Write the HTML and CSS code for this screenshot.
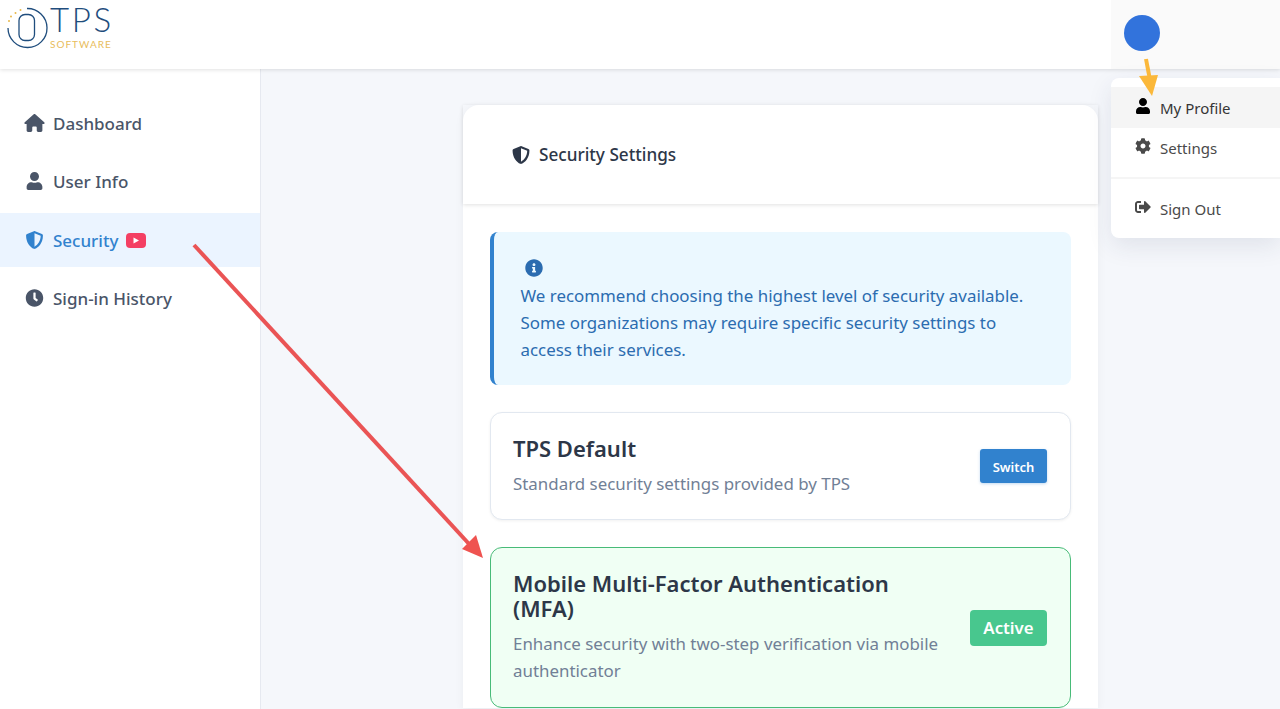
FILE: index.html
```html
<!DOCTYPE html>
<html lang="en">
<head>
<meta charset="utf-8">
<title>Security Settings</title>
<link rel="stylesheet" href="styles.css">
</head>
<body>
<div class="page">
  <header class="topbar">
    <div class="logo">
      <svg class="logo-mark" viewBox="0 0 48 48" width="48" height="48">
        <path d="M25 4.5A19.5 19.5 0 1 1 6 24" fill="none" stroke="#1f4d7d" stroke-width="1.3"/>
        <rect x="17" y="10.5" width="15.5" height="26" rx="6" fill="none" stroke="#1f4d7d" stroke-width="1.3"/>
        <circle cx="7" cy="17" r="1" fill="#e8b84a"/><circle cx="9" cy="12.5" r="1" fill="#e8b84a"/><circle cx="13.5" cy="9" r="1" fill="#e8b84a"/><circle cx="18.5" cy="6" r="1" fill="#e8b84a"/>
      </svg>
      <div class="logo-words"><span class="logo-tps">TPS</span><span class="logo-soft">SOFTWARE</span></div>
    </div>
    <div class="account"><span class="avatar"></span></div>
  </header>
  <div class="layout">
    <nav class="sidebar">
      <a class="nav-item"><svg class="nav-icon" viewBox="0 0 576 512"><path d="M575.8 255.5c0 18-15 32.1-32 32.1h-32l.7 160.2c0 2.7-.2 5.4-.5 8.1V472c0 22.1-17.9 40-40 40H456c-1.1 0-2.2 0-3.3-.1c-1.4 .1-2.8 .1-4.2 .1H416 392c-22.1 0-40-17.9-40-40V448 384c0-17.7-14.3-32-32-32H256c-17.7 0-32 14.3-32 32v64 24c0 22.1-17.9 40-40 40H160 128.1c-1.5 0-3-.1-4.5-.2c-1.2 .1-2.4 .2-3.6 .2H104c-22.1 0-40-17.9-40-40V360c0-.9 0-1.9 .1-2.8V287.6H32c-18 0-32-14-32-32.1c0-9 3-17 10-24L266.4 8c7-7 15-8 22-8s15 2 21 7L564.8 231.5c8 7 12 15 11 24z"/></svg>Dashboard</a>
      <a class="nav-item"><svg class="nav-icon" viewBox="0 0 448 512"><path d="M224 256c70.7 0 128-57.3 128-128S294.7 0 224 0 96 57.3 96 128s57.3 128 128 128zm89.6 32h-16.7c-22.2 10.2-46.9 16-72.9 16s-50.6-5.8-72.9-16h-16.7C60.2 288 0 348.2 0 422.4V464c0 26.5 21.5 48 48 48h352c26.5 0 48-21.5 48-48v-41.6c0-74.2-60.2-134.4-134.4-134.4z"/></svg>User Info</a>
      <a class="nav-item nav-active"><svg class="nav-icon" viewBox="0 0 512 512"><path d="M466.5 83.7l-192-80a48.15 48.15 0 0 0-36.9 0l-192 80C27.7 91.1 16 108.6 16 128c0 198.5 114.5 335.7 221.5 380.3 11.8 4.9 25.1 4.9 36.9 0C360.1 472.6 496 349.3 496 128c0-19.4-11.7-36.9-29.5-44.3zM256.1 446.3l-.1-381 175.9 73.3c-3.3 151.4-82.1 261.1-175.8 307.7z"/></svg><span class="nav-label">Security</span><span class="video-badge"><svg viewBox="0 0 20 15" width="20" height="15"><rect width="20" height="15" rx="4" fill="#f43f63"/><path d="M7.5 4.5l5.5 3-5.5 3z" fill="#fff"/></svg></span></a>
      <a class="nav-item"><svg class="nav-icon" viewBox="0 0 512 512"><path d="M256,8C119,8,8,119,8,256S119,504,256,504,504,393,504,256,393,8,256,8Zm92.49,313h0l-20,25a16,16,0,0,1-22.49,2.5h0l-67-49.72a40,40,0,0,1-15-31.23V112a16,16,0,0,1,16-16h32a16,16,0,0,1,16,16V256l58,42.5A16,16,0,0,1,348.49,321Z"/></svg><span class="nav-label">Sign-in History</span></a>
    </nav>
    <main class="main">
      <section class="card">
        <div class="card-head">
          <svg class="head-icon" viewBox="0 0 512 512"><path d="M466.5 83.7l-192-80a48.15 48.15 0 0 0-36.9 0l-192 80C27.7 91.1 16 108.6 16 128c0 198.5 114.5 335.7 221.5 380.3 11.8 4.9 25.1 4.9 36.9 0C360.1 472.6 496 349.3 496 128c0-19.4-11.7-36.9-29.5-44.3zM256.1 446.3l-.1-381 175.9 73.3c-3.3 151.4-82.1 261.1-175.8 307.7z"/></svg>
          <h1 class="card-title">Security Settings</h1>
        </div>
        <div class="card-body">
          <div class="alert">
            <svg class="alert-icon" viewBox="0 0 512 512"><path d="M256 8C119.043 8 8 119.083 8 256c0 136.997 111.043 248 248 248s248-111.003 248-248C504 119.083 392.957 8 256 8zm0 110c23.196 0 42 18.804 42 42s-18.804 42-42 42-42-18.804-42-42 18.804-42 42-42zm56 254c0 6.627-5.373 12-12 12h-88c-6.627 0-12-5.373-12-12v-24c0-6.627 5.373-12 12-12h12v-64h-12c-6.627 0-12-5.373-12-12v-24c0-6.627 5.373-12 12-12h64c6.627 0 12 5.373 12 12v100h12c6.627 0 12 5.373 12 12v24z"/></svg>
            <p class="alert-text">We recommend choosing the highest level of security available. Some organizations may require specific security settings to access their services.</p>
          </div>
          <div class="option">
            <div class="option-copy">
              <h2 class="option-title">TPS Default</h2>
              <p class="option-desc">Standard security settings provided by TPS</p>
            </div>
            <button class="btn-switch">Switch</button>
          </div>
          <div class="option option-active">
            <div class="option-copy">
              <h2 class="option-title">Mobile Multi-Factor Authentication (MFA)</h2>
              <p class="option-desc">Enhance security with two-step verification via mobile authenticator</p>
            </div>
            <span class="badge-active">Active</span>
          </div>
        </div>
      </section>
    </main>
  </div>
  <div class="menu">
    <a class="menu-item menu-hover"><svg class="menu-icon" viewBox="0 0 448 512"><path d="M224 256c70.7 0 128-57.3 128-128S294.7 0 224 0 96 57.3 96 128s57.3 128 128 128zm89.6 32h-16.7c-22.2 10.2-46.9 16-72.9 16s-50.6-5.8-72.9-16h-16.7C60.2 288 0 348.2 0 422.4V464c0 26.5 21.5 48 48 48h352c26.5 0 48-21.5 48-48v-41.6c0-74.2-60.2-134.4-134.4-134.4z"/></svg>My Profile</a>
    <a class="menu-item menu-plain"><svg class="menu-icon" viewBox="0 0 512 512"><path d="M487.4 315.7l-42.6-24.6c4.3-23.2 4.3-47 0-70.2l42.6-24.6c4.9-2.8 7.1-8.6 5.5-14-11.1-35.6-30-67.8-54.7-94.6-3.8-4.1-10-5.1-14.8-2.3L380.8 110c-17.9-15.4-38.5-27.3-60.8-35.1V25.8c0-5.6-3.9-10.5-9.4-11.7-36.7-8.2-74.3-7.8-109.2 0-5.5 1.2-9.4 6.1-9.4 11.7V75c-22.2 7.9-42.8 19.8-60.8 35.1L88.7 85.5c-4.9-2.8-11-1.9-14.8 2.3-24.7 26.7-43.6 58.9-54.7 94.6-1.7 5.4.6 11.2 5.5 14L67.3 221c-4.3 23.2-4.3 47 0 70.2l-42.6 24.6c-4.9 2.8-7.1 8.6-5.5 14 11.1 35.6 30 67.8 54.7 94.6 3.8 4.1 10 5.1 14.8 2.3l42.6-24.6c17.9 15.4 38.5 27.3 60.8 35.1v49.2c0 5.6 3.9 10.5 9.4 11.7 36.7 8.2 74.3 7.8 109.2 0 5.5-1.2 9.4-6.1 9.4-11.7v-49.2c22.2-7.9 42.8-19.8 60.8-35.1l42.6 24.6c4.9 2.8 11 1.9 14.8-2.3 24.7-26.7 43.6-58.9 54.7-94.6 1.5-5.5-.7-11.3-5.6-14.1zM256 336c-44.1 0-80-35.9-80-80s35.9-80 80-80 80 35.9 80 80-35.9 80-80 80z"/></svg>Settings</a>
    <div class="menu-rule"></div>
    <a class="menu-item menu-plain"><svg class="menu-icon" viewBox="0 0 512 512"><path d="M497 273L329 441c-15 15-41 4.5-41-17v-96H152c-13.3 0-24-10.7-24-24v-96c0-13.3 10.7-24 24-24h136V88c0-21.4 25.9-32 41-17l168 168c9.3 9.4 9.3 24.6 0 34zM192 436v-40c0-6.6-5.4-12-12-12H96c-17.7 0-32-14.3-32-32V160c0-17.7 14.3-32 32-32h84c6.6 0 12-5.4 12-12V76c0-6.6-5.4-12-12-12H96c-53 0-96 43-96 96v192c0 53 43 96 96 96h84c6.6 0 12-5.4 12-12z"/></svg>Sign Out</a>
  </div>
  <svg class="arrows" viewBox="0 0 1280 709" width="1280" height="709">
    <line x1="194" y1="245" x2="470" y2="545" stroke="#ea5455" stroke-width="4"/>
    <polygon points="462,549 476,535 483,558" fill="#ef5350"/>
    <line x1="1146" y1="59" x2="1150" y2="80" stroke="#fbb83a" stroke-width="4"/>
    <polygon points="1139,76 1158,75 1152,96" fill="#fbb83a"/>
  </svg>
</div>
</body>
</html>
```
FILE: styles.css
```css
* { box-sizing: border-box; }
html, body { margin: 0; padding: 0; height: 100%; overflow: hidden; }
body { font-family: "Noto Sans", "Open Sans", sans-serif; background: #fff; color: #2d3748; }
h1, h2, p { margin: 0; }
.page { position: relative; width: 1280px; height: 709px; overflow: hidden; display: flex; flex-direction: column; }

.topbar { height: 69px; flex: none; display: flex; justify-content: space-between; background: #fff; box-shadow: 0 1px 4px rgba(0,0,0,.12); position: relative; z-index: 2; }
.logo { display: flex; padding: 3px 0 0 2px; align-items: flex-start; }
.logo-mark { margin-top: 1px; }
.logo-words { display: flex; flex-direction: column; }
.logo-tps { font-family: "Lato", sans-serif; font-weight: 300; font-size: 33px; line-height: 33px; letter-spacing: 2.6px; color: #1f4d7d; }
.logo-soft { font-family: "Lato", sans-serif; font-size: 10px; line-height: 11px; margin-top: 3px; letter-spacing: 1px; color: #e8bd5c; }
.account { width: 169px; background: #fafafa; padding: 15px 0 0 13px; }
.avatar { display: block; width: 36px; height: 36px; border-radius: 50%; background: #3273dc; }

.layout { flex: 1; display: flex; min-height: 0; }
.sidebar { width: 261px; flex: none; background: #fff; border-right: 1px solid #e6e9f0; padding-top: 27px; display: flex; flex-direction: column; gap: 4.33px; }
.nav-item { height: 54px; display: flex; align-items: center; padding-left: 24px; font-size: 17px; font-weight: 500; color: #4a5568; }
.nav-label { padding-top: 1px; }
.nav-icon { width: 21px; height: 18px; margin-right: 8px; fill: #4a5568; flex: none; }
.nav-active { background: #ebf4ff; color: #3182ce; }
.nav-active .nav-icon { fill: #3182ce; }
.video-badge { display: flex; margin-left: 8px; padding-top: 1px; }

.main { flex: 1; background: #f5f7fb; padding: 36px 0 0 202px; }
.card { width: 635px; background: #fff; border-radius: 16px 16px 0 0; box-shadow: 0 2px 10px rgba(0,0,0,.05); }
.card-head { height: 99px; display: flex; align-items: center; padding: 0 0 0 49px; box-shadow: 0 1px 4px rgba(0,0,0,.12); position: relative; }
.head-icon { width: 18px; height: 18px; margin-right: 9px; fill: #2d3748; flex: none; }
.card-title { font-size: 17.15px; font-weight: 500; color: #2d3748; }
.card-body { padding: 28px 27px 0; display: flex; flex-direction: column; gap: 27px; }

.alert { height: 153px; background: #ebf8ff; border-left: 4px solid #3182ce; border-radius: 8px; padding: 25px 40px 0 26.5px; color: #2b6cb0; }
.alert-icon { display: block; width: 18px; height: 18px; margin: 2px 0 5px 4px; fill: #2b6cb0; }
.alert-text { font-size: 16.9px; line-height: 27px; }

.option { display: flex; align-items: center; justify-content: space-between; gap: 24px; padding: 0 23px 0 22px; height: 108px; background: #fff; border: 1px solid #e2e8f0; border-radius: 12px; box-shadow: 0 1px 3px rgba(0,0,0,.06); }
.option-active { height: 161px; background: #f0fff4; border-color: #48bb78; box-shadow: none; }
.option-title { font-size: 22px; line-height: 25px; font-weight: 600; color: #2d3748; margin-bottom: 9px; }
.option-desc { font-size: 16.9px; line-height: 27px; color: #718096; }
.btn-switch { flex: none; width: 67px; height: 34px; border: 0; border-radius: 3px; background: #3182ce; color: #fff; font: 600 13px "Noto Sans", sans-serif; box-shadow: 0 1px 3px rgba(49,130,206,.3); padding: 2px 0 0; }
.badge-active { flex: none; width: 77px; height: 36px; border-radius: 4px; background: #48c78e; color: #fff; font-size: 16.8px; font-weight: 600; display: flex; align-items: center; justify-content: center; }

.menu { position: absolute; left: 1111px; top: 78px; width: 169px; height: 160px; background: #fff; border-radius: 8px 0 0 8px; padding-top: 9px; box-shadow: 0 8px 24px rgba(40,50,90,.1); z-index: 3; }
.menu-item { height: 41px; display: flex; align-items: center; padding-left: 24px; font-size: 15px; color: #4a4a4a; }
.menu-plain { padding-bottom: 2px; }
.menu-hover { background: #f5f5f5; color: #363636; }
.menu-icon { width: 16px; height: 16px; margin-right: 9px; margin-top: -4px; fill: #4a4a4a; flex: none; }
.menu-hover .menu-icon { fill: #000; }
.menu-rule { height: 2px; background: #f5f5f5; margin: 8px 0 10px; }
.arrows { position: absolute; left: 0; top: 0; z-index: 5; pointer-events: none; }
```
